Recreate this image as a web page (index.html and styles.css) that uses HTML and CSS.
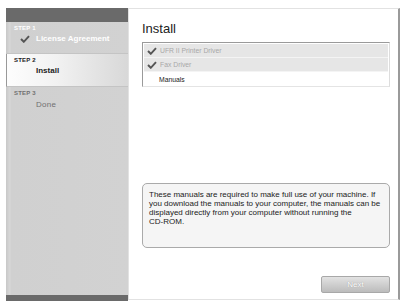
FILE: index.html
```html
<!DOCTYPE html>
<html lang="en">
<head>
    <meta charset="UTF-8">
    <title>Install</title>
    <link rel="stylesheet" href="styles.css">
</head>
<body>
  <div class="window">
    <div class="sidebar">
      <div class="sidebar-top"></div>
      <div class="step step-done">
        <div class="step-label">STEP 1</div>
        <div class="step-name">
          <svg class="check" width="10" height="8" viewBox="0 0 12 10"><path d="M1 5 L4.5 8.5 L11 1.5" fill="none" stroke="#555" stroke-width="2.4"/></svg>
          License Agreement
        </div>
      </div>
      <div class="step step-current">
        <div class="step-label">STEP 2</div>
        <div class="step-name">Install</div>
      </div>
      <div class="step step-next">
        <div class="step-label">STEP 3</div>
        <div class="step-name">Done</div>
      </div>
      <div class="sidebar-fill"></div>
      <div class="sidebar-bottom"></div>
    </div>

    <div class="main">
      <h1 class="title">Install</h1>
      <ul class="items">
        <li class="item installed">
          <svg class="check" width="10" height="8" viewBox="0 0 12 10"><path d="M1 5 L4.5 8.5 L11 1.5" fill="none" stroke="#555" stroke-width="2.4"/></svg>
          UFR II Printer Driver
        </li>
        <li class="item installed">
          <svg class="check" width="10" height="8" viewBox="0 0 12 10"><path d="M1 5 L4.5 8.5 L11 1.5" fill="none" stroke="#555" stroke-width="2.4"/></svg>
          Fax Driver
        </li>
        <li class="item">Manuals</li>
      </ul>
      <div class="spacer"></div>
      <div class="note">These manuals are required to make full use of your machine. If you download the manuals to your computer, the manuals can be displayed directly from your computer without running the <span class="nowrap">CD-ROM.</span></div>
      <div class="buttons">
        <button type="button" class="next" disabled>Next</button>
      </div>
    </div>
  </div>
</body>
</html>
```

FILE: styles.css
```css
body {
  margin: 0;
  background-color: #fff;
  font-family: 'Liberation Sans', Arial, sans-serif;
}

.window {
  display: flex;
  height: 293px;
  margin: 8px 0 0 6px;
}

/* ------SIDEBAR------- */
.sidebar {
  width: 122px;
  display: flex;
  flex-direction: column;
  background: linear-gradient(to right, #c8c8c8 0, #d8d8d8 4px, #d0d0d0 5px, #d2d2d2 100%);
}

.sidebar-top {
  height: 14px;
  background-color: #6a6a6a;
}

.sidebar-bottom {
  height: 6px;
  background-color: #6a6a6a;
}

.sidebar-fill {
  flex: 1;
}

.step {
  height: 32px;
  padding: 3px 0 0 8px;
  box-sizing: border-box;
  border-bottom: 1px solid #c4c4c4;
}

.step-label {
  font-size: 6px;
  font-weight: bold;
  letter-spacing: 0.2px;
}

.step-name {
  display: flex;
  align-items: center;
  margin-top: 3px;
  padding-left: 22px;
  font-size: 8px;
  font-weight: bold;
}

.step-done .step-label,
.step-done .step-name {
  color: #fff;
}

.step-done .step-name {
  padding-left: 6px;
}

.step-done .check {
  margin-right: 6px;
}

.step-current {
  height: 33px;
  background: linear-gradient(to right, #fdfdfd 0, #f2f2f2 40%, #d8d8d8 100%);
  border-left: 1px solid #999;
  padding-left: 7px;
}

.step-current .step-label,
.step-current .step-name {
  color: #222;
}

.step-next {
  border-bottom: none;
}

.step-next .step-label,
.step-next .step-name {
  color: #707070;
}

.step-next .step-name {
  font-weight: normal;
  margin-top: 4px;
  letter-spacing: 0.3px;
}

/* ------PANEL------- */
.main {
  flex: 1;
  display: flex;
  flex-direction: column;
  background-color: #fff;
  border: 1px solid #e2e2e2;
  border-right: 2px solid #9a9a9a;
  padding: 12px 8px 6px 13px;
  margin-bottom: 1px;
}

.title {
  margin: 0 0 6px 0;
  font-size: 13px;
  font-weight: normal;
  color: #222;
}

.items {
  list-style: none;
  margin: 0;
  padding: 1px 1px 0;
  border: 1px solid #9a9a9a;
  border-bottom-color: #e4e4e4;
  border-right-color: #ddd;
}

.item {
  display: flex;
  align-items: center;
  height: 14px;
  padding-left: 15px;
  font-size: 6.8px;
  color: #222;
}

.item.installed {
  padding-left: 3px;
  background-color: #e6e6e6;
  color: #a8a8a8;
  border-bottom: 1px solid #f4f4f4;
  height: 13px;
}

.item .check {
  margin-right: 3px;
}

.spacer {
  flex: 1;
}

.note {
  height: 65px;
  box-sizing: border-box;
  padding: 6px 5px 6px 6px;
  background-color: #f5f5f5;
  border: 1px solid #aaa;
  border-radius: 5px;
  font-size: 8px;
  line-height: 9px;
  color: #222;
}

.nowrap {
  white-space: nowrap;
}

.buttons {
  display: flex;
  justify-content: flex-end;
  margin-top: 28px;
}

.next {
  width: 69px;
  height: 17px;
  padding: 0;
  font-family: 'Liberation Sans', Arial, sans-serif;
  font-size: 8px;
  color: #fff;
  background: linear-gradient(#e2e2e2, #bcbcbc);
  border: 1px solid #a8a8a8;
  border-radius: 2px;
  text-shadow: 0 0 1px #888;
}
```
